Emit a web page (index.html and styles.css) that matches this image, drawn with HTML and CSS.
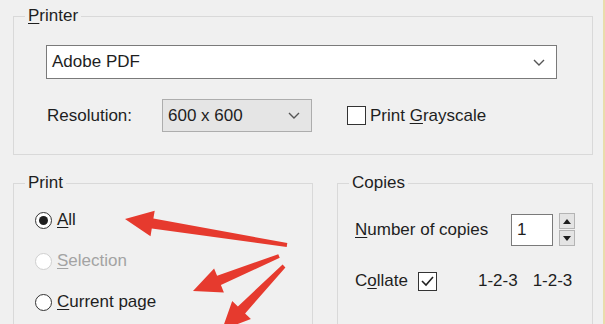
FILE: index.html
```html
<!DOCTYPE html>
<html lang="en">
<head>
    <meta charset="UTF-8">
    <title>Print</title>
    <link rel="stylesheet" href="styles.css">
</head>
<body>
    <div class="dialog">
        <fieldset class="group printer">
            <legend><u>P</u>rinter</legend>
            <div class="group-body">
                <div class="combo wide">
                    <span>Adobe PDF</span>
                    <svg class="chevron" width="12" height="7" viewBox="0 0 12 7"><polyline points="1,1 6,6 11,1" /></svg>
                </div>
                <div class="row">
                    <span class="res-label">Resolution:</span>
                    <div class="combo res">
                        <span>600 x 600</span>
                        <svg class="chevron" width="12" height="7" viewBox="0 0 12 7"><polyline points="1,1 6,6 11,1" /></svg>
                    </div>
                    <span class="check gray-check"></span>
                    <span class="check-text">Print <u>G</u>rayscale</span>
                </div>
            </div>
        </fieldset>

        <div class="lower">
            <fieldset class="group print">
                <legend>Print</legend>
                <div class="group-body">
                    <div class="radio-row">
                        <span class="radio checked"></span>
                        <span><u>A</u>ll</span>
                    </div>
                    <div class="radio-row disabled">
                        <span class="radio"></span>
                        <span><u>S</u>election</span>
                    </div>
                    <div class="radio-row">
                        <span class="radio"></span>
                        <span><u>C</u>urrent page</span>
                    </div>
                </div>
            </fieldset>

            <fieldset class="group copies">
                <legend>Copies</legend>
                <div class="group-body">
                    <div class="copies-row">
                        <span class="copies-label"><u>N</u>umber of copies</span>
                        <div class="num-input">1</div>
                        <div class="spinner">
                            <div class="spin-btn"><svg width="8" height="5" viewBox="0 0 8 5"><polygon points="4,0 8,5 0,5" /></svg></div>
                            <div class="spin-btn"><svg width="8" height="5" viewBox="0 0 8 5"><polygon points="0,0 8,0 4,5" /></svg></div>
                        </div>
                    </div>
                    <div class="collate-row">
                        <span>C<u>o</u>llate</span>
                        <span class="check">
                            <svg width="15" height="13" viewBox="0 0 15 13"><polyline points="2,6 6,10 13,2" /></svg>
                        </span>
                        <span class="order">1-2-3</span>
                        <span class="order">1-2-3</span>
                    </div>
                </div>
            </fieldset>
        </div>

        <svg class="arrows" width="605" height="324" viewBox="0 0 605 324">
            <polygon points="125,219 154.7,210.7 153.4,218.6 287.3,243 286.7,247 151.8,228.4 150.5,236.3" />
            <polygon points="193,291 214.1,268.4 217.1,275.8 278.25,254.15 279.75,257.85 220.9,285 223.9,292.5" />
            <polygon points="222,330 232.2,300.9 237.9,306.4 282.6,264.6 285.4,267.4 245.1,313.4 250.9,319" />
        </svg>
    </div>
</body>
</html>
```

FILE: styles.css
```css
* {
    box-sizing: border-box;
}

body {
    margin: 0;
    background-color: #f0f0f0;
    font-family: "Liberation Sans", Arial, sans-serif;
    font-size: 17px;
    color: #1e1e1e;
}

u {
    text-underline-offset: 2px;
}

.dialog {
    position: relative;
    width: 605px;
    height: 324px;
    overflow: hidden;
    padding: 6px 10px 0 13px;
    border-right: 2px solid #e9dcab;
    background-color: #f0f0f0;
}

/* group boxes */
.group {
    margin: 0;
    padding: 0;
    border: 1px solid #d9d9d9;
    min-width: 0;
}

.group legend {
    margin-left: 11px;
    padding: 0 3px;
    line-height: 20px;
}

.printer .group-body {
    padding: 19px 0 22px 32px;
}

.combo {
    display: flex;
    align-items: center;
    justify-content: space-between;
    border: 1px solid #7a7a7a;
    background-color: #fff;
    padding: 0 11px 0 5px;
}

.combo.wide {
    width: 511px;
    height: 34px;
}

.combo.res {
    width: 150px;
    height: 33px;
    background-color: #e5e5e5;
    border-color: #adadad;
}

.chevron polyline {
    fill: none;
    stroke: #555;
    stroke-width: 1.4;
}

.row {
    display: flex;
    align-items: center;
    margin-top: 20px;
}

.res-label {
    width: 116px;
    padding-left: 1px;
}

.check {
    display: inline-flex;
    align-items: center;
    justify-content: center;
    width: 19px;
    height: 19px;
    border: 1px solid #333;
    background-color: #fff;
}

.gray-check {
    margin-left: 35px;
    margin-right: 4px;
}

.check polyline {
    fill: none;
    stroke: #222;
    stroke-width: 1.6;
}

.lower {
    display: flex;
    gap: 24px;
    margin-top: 18px;
}

.print {
    width: 300px;
    height: 170px;
}

.print .group-body {
    padding: 15px 0 0 21px;
}

.copies {
    width: 256px;
    height: 170px;
}

.copies .group-body {
    padding: 20px 0 0 17px;
}

/* radio buttons */
.radio-row {
    display: flex;
    align-items: center;
    gap: 5px;
    height: 24px;
    margin-bottom: 17px;
}

.radio {
    position: relative;
    width: 17px;
    height: 17px;
    border: 1px solid #333;
    border-radius: 50%;
    background-color: #fff;
}

.radio.checked::after {
    content: "";
    position: absolute;
    left: 3px;
    top: 3px;
    width: 9px;
    height: 9px;
    border-radius: 50%;
    background-color: #1e1e1e;
}

.disabled {
    color: #a3a3a3;
}

.disabled .radio {
    border-color: #cfcfcf;
}

/* copies */
.copies-row {
    display: flex;
    align-items: center;
    height: 33px;
}

.copies-label {
    width: 156px;
}

.num-input {
    width: 42px;
    height: 32px;
    border: 1px solid #7a7a7a;
    background-color: #fff;
    padding: 5px 0 0 5px;
}

.spinner {
    display: flex;
    flex-direction: column;
    gap: 1px;
    margin-left: 6px;
}

.spin-btn {
    display: flex;
    align-items: center;
    justify-content: center;
    width: 16px;
    height: 16px;
    border: 1px solid #b4b4b4;
    background-color: #e4e4e4;
}

.spin-btn polygon {
    fill: #1e1e1e;
}

.collate-row {
    display: flex;
    align-items: center;
    height: 32px;
    margin-top: 19px;
}

.collate-row .check {
    margin-left: 10px;
    margin-right: 41px;
}

.order + .order {
    margin-left: 15px;
}

.arrows {
    position: absolute;
    left: 0;
    top: 0;
    pointer-events: none;
}

.arrows polygon {
    fill: #e63a2e;
}
```
